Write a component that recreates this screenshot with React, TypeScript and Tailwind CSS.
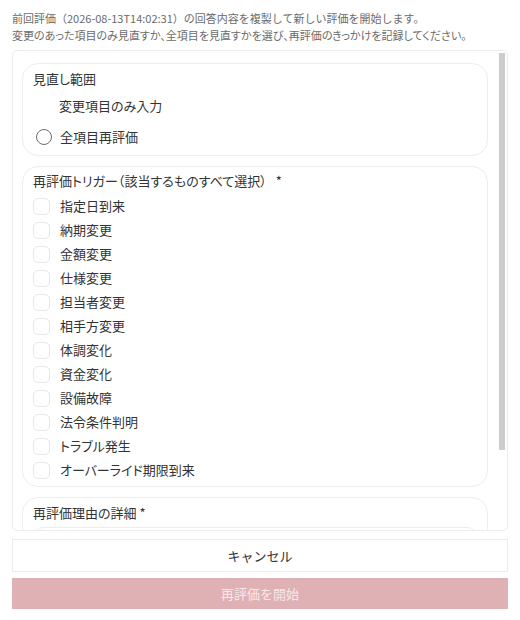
import React from "react";

const triggers = [
  "指定日到来",
  "納期変更",
  "金額変更",
  "仕様変更",
  "担当者変更",
  "相手方変更",
  "体調変化",
  "資金変化",
  "設備故障",
  "法令条件判明",
  "トラブル発生",
  "オーバーライド期限到来",
];

export default function App() {
  return (
    <div
      className="w-[520px] h-[620px] bg-white px-[12px] pt-[10px] text-[#333] overflow-hidden"
      style={{ fontFamily: '"Noto Sans CJK JP", "Noto Sans", sans-serif' }}
    >
      <div className="text-[11px] leading-[17px] text-[#6b6b6b] mb-[6px] whitespace-nowrap">
        <p>前回評価（2026-08-13T14:02:31）の回答内容を複製して新しい評価を開始します。</p>
        <p className="[font-feature-settings:'palt']">
          変更のあった項目のみ見直すか、全項目を見直すかを選び、再評価のきっかけを記録してください。
        </p>
      </div>

      <div className="relative h-[481px] border border-[#ececec] rounded-[5px]">
        <div className="h-full overflow-y-scroll [scrollbar-width:none] pl-[9px] pr-[19px] pt-[12px] pb-[13px] flex flex-col gap-[10px] [font-feature-settings:'palt']">
          {/* Card 1 */}
          <div className="shrink-0 border border-[#ededed] rounded-[16px] px-[10px] pt-[6px] pb-[8px] text-[13px]">
            <div className="h-[18px] leading-[18px]">見直し範囲</div>
            <div className="flex items-center h-[18px] mt-[9px] pl-[26px] leading-[18px]">
              変更項目のみ入力
            </div>
            <div className="flex items-center h-[20px] mt-[12px] gap-[8px]">
              <span className="ml-[3px] w-[16px] h-[16px] rounded-full border border-[#6e6e6e] bg-white"></span>
              <span className="leading-[18px]">全項目再評価</span>
            </div>
          </div>

          {/* Card 2 */}
          <div className="shrink-0 border border-[#ededed] rounded-[16px] px-[10px] pt-[5px] pb-[4px] text-[13px]">
            <div className="h-[18px] leading-[18px]">
              再評価トリガー（該当するものすべて選択）<span className="ml-[9px]">*</span>
            </div>
            <div className="flex flex-col mt-[4px]">
              {triggers.map((t) => (
                <label key={t} className="flex items-center h-[24px] gap-[10px]">
                  <span className="w-[17px] h-[17px] rounded-[5px] border border-[#e6e6e6] bg-white shrink-0"></span>
                  <span className="leading-[18px]">{t}</span>
                </label>
              ))}
            </div>
          </div>

          {/* Card 3 */}
          <div className="shrink-0 border border-[#ededed] rounded-[16px] px-[10px] pt-[6px] pb-[12px] text-[13px]">
            <div className="h-[18px] leading-[18px]">
              再評価理由の詳細 <span>*</span>
            </div>
            <div className="mt-[5px] h-[72px] border border-[#ececec] rounded-[10px] bg-white"></div>
          </div>
        </div>
        {/* scrollbar thumb overlay */}
        <div className="absolute top-[2px] right-[2px] w-[6px] h-[397px] bg-[#cdcdcd]"></div>
      </div>

      <div className="mt-[8px] flex flex-col gap-[6px]">
        <button className="h-[33px] w-full border border-[#ececec] bg-white text-[13px] text-[#333] flex items-center justify-center">
          キャンセル
        </button>
        <button className="h-[31px] w-full bg-[#e0b1b4] text-[13px] text-[#f8e8e9] flex items-center justify-center">
          再評価を開始
        </button>
      </div>
    </div>
  );
}
